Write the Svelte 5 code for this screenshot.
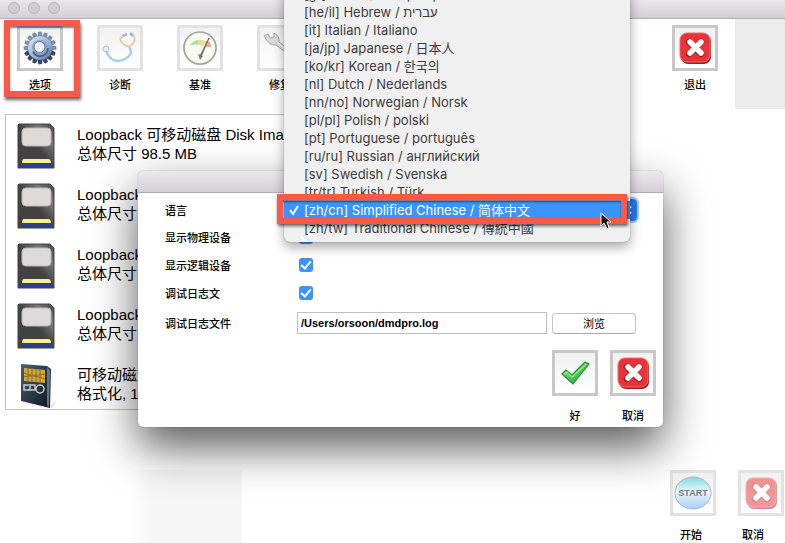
<script lang="ts">
  const languages = [
    { code: "gr", label: "[gr] Greek / ελληνική" },
    { code: "he", label: "[he/il] Hebrew / עברית" },
    { code: "it", label: "[it] Italian / Italiano" },
    { code: "ja", label: "[ja/jp] Japanese / 日本人" },
    { code: "ko", label: "[ko/kr] Korean / 한국의" },
    { code: "nl", label: "[nl] Dutch / Nederlands" },
    { code: "nn", label: "[nn/no] Norwegian / Norsk" },
    { code: "pl", label: "[pl/pl] Polish / polski" },
    { code: "pt", label: "[pt] Portuguese / português" },
    { code: "ru", label: "[ru/ru] Russian / английский" },
    { code: "sv", label: "[sv] Swedish / Svenska" },
    { code: "tr", label: "[tr/tr] Turkish / Türk" },
    { code: "zh-cn", label: "[zh/cn] Simplified Chinese / 简体中文" },
    { code: "zh-tw", label: "[zh/tw] Traditional Chinese / 傳統中國" },
  ];

  const tools = [
    { id: "gear", label: "选项", dim: false },
    { id: "scope", label: "诊断", dim: true },
    { id: "gauge", label: "基准", dim: true },
    { id: "wrench", label: "修复", dim: true },
  ];

  const disks = [
    { name: "Loopback 可移动磁盘 Disk Image", info: "总体尺寸 98.5 MB", card: false },
    { name: "Loopback", info: "总体尺寸", card: false },
    { name: "Loopback", info: "总体尺寸", card: false },
    { name: "Loopback", info: "总体尺寸", card: false },
    { name: "可移动磁盘", info: "格式化, 1", card: true },
  ];

  const teeth = Array.from({ length: 16 }, (_, i) => i * 22.5);

  let language = $state("zh-cn");
  let physical = $state(true);
  let logical = $state(true);
  let debugLog = $state(true);
  let logFile = $state("/Users/orsoon/dmdpro.log");
</script>

{#snippet icon(id: string)}
  <svg class="icon" viewBox="0 0 38 38" aria-hidden="true">
    {#if id === "gear"}
      {#each teeth as angle}
        <path
          d="M17 3 L20.5 2.5 L22 9 H16.5Z"
          fill={angle > 90 && angle < 250 ? "#37475f" : "#7d8ea6"}
          transform="rotate({angle} 19 19)"
        />
      {/each}
      <circle cx="19" cy="19" r="12" fill="url(#steel)" />
      <circle cx="19" cy="19" r="8" fill="#8aa5cb" />
      <path d="M12 23 A8 8 0 0 0 27 19" fill="none" stroke="#4a6389" stroke-width="2" />
      <circle cx="18.5" cy="18" r="5.5" fill="#f6f6f6" stroke="#5f779b" stroke-width="1" />
    {:else if id === "scope"}
      <path d="M5 21 C8 32 17 34 24 30 C31 26 31 23 28 17" fill="none" stroke="#a5cfec" stroke-width="2.5" />
      <path d="M28 18 C18 14 17 8 24 6 M28 18 C36 13 34 6 30 5" fill="none" stroke="#edc9a4" stroke-width="2" />
      <path d="M22 7 L26 5 M29 4 L32 7" stroke="#9fb6cf" stroke-width="2.5" />
      <circle cx="5" cy="20" r="3" fill="#e6edf2" stroke="#adc2d0" />
    {:else if id === "gauge"}
      <circle cx="19" cy="19" r="16" fill="#fbfaf1" stroke="#9fa5a0" stroke-width="1.7" />
      <path d="M8 17 Q13 10 20 11 L20 16 Q13 14 8 17Z" fill="#a7dda0" />
      <path d="M17 11 Q22 10 26 13 L22 17 L17 15Z" fill="#ecdf8d" />
      <path d="M25 12 Q30 11 30 18 L24 18Z" fill="#efa29b" />
      <path d="M28 9 L20 28 L19 27Z" fill="#8b5e5e" stroke="#79736f" stroke-width="1" />
      <path d="M17 25 L22 27 L19 31Z" fill="#747a7a" />
    {:else if id === "wrench"}
      <path d="M3 7 L7 5 L9 9 L13 8 L13 4 Q19 7 18 13 L34 25 L32 29 L15 16 Q8 17 3 7Z" fill="#dadada" stroke="#a5a5a5" />
      <path d="M17 14 L32 26" stroke="#f5f5f5" stroke-width="1.5" />
    {:else if id === "close"}
      <rect x="5" y="5" width="30" height="30" rx="7" fill="#8d2525" />
      <rect x="4" y="4" width="30" height="29" rx="7" fill="#ea3338" stroke="#f26b6b" />
      <path d="M13 13 L25 25 M25 13 L13 25" stroke="#9d1d22" stroke-width="6.5" stroke-linecap="round" />
      <path d="M14 13 L25 24 M25 13 L14 24" stroke="#fff" stroke-width="5.5" stroke-linecap="round" />
    {:else if id === "ok"}
      <path d="M6 20 L10 16 L16 21 L29 8 L33 10 L17 30Z" fill="url(#leaf)" stroke="#278c32" stroke-width="1.2" />
      <path d="M8 20 L11 18 L16 23 L30 10" fill="none" stroke="#9cea88" stroke-width="1.2" />
    {:else if id === "start"}
      <ellipse cx="19" cy="19" rx="18" ry="16" fill="url(#sky)" stroke="#aeb7c6" />
      <text x="19" y="22" text-anchor="middle" class="start-text">START</text>
    {/if}
  </svg>
{/snippet}

<svg class="defs" width="0" height="0" aria-hidden="true">
  <defs>
    <linearGradient id="steel" x1="0" y1="0" x2="1" y2="1">
      <stop offset="0" stop-color="#d5e4f6" />
      <stop offset=".5" stop-color="#a3bde0" />
      <stop offset="1" stop-color="#55709a" />
    </linearGradient>
    <linearGradient id="leaf" x1="0" y1="0" x2="1" y2="1">
      <stop offset="0" stop-color="#9be68c" />
      <stop offset="1" stop-color="#10a72d" />
    </linearGradient>
    <linearGradient id="sky" x1="0" y1="0" x2="0" y2="1">
      <stop offset="0" stop-color="#7fdde0" />
      <stop offset=".45" stop-color="#eaf6fc" />
      <stop offset="1" stop-color="#a9cdf8" />
    </linearGradient>
    <linearGradient id="shell" x1="0" y1="1" x2="1" y2="0">
      <stop offset=".5" stop-color="#424242" />
      <stop offset=".75" stop-color="#777" />
      <stop offset="1" stop-color="#444" />
    </linearGradient>
    <linearGradient id="navy" x1="0" y1="0" x2="1" y2="1">
      <stop offset="0" stop-color="#4a6070" />
      <stop offset="1" stop-color="#0d151f" />
    </linearGradient>
  </defs>
</svg>

<main class="window">
  <header class="titlebar">
    <span class="light"></span>
    <span class="light"></span>
    <span class="light"></span>
  </header>

  <nav class="toolbar">
    {#each tools as tool}
      <div class="tool" class:marked={tool.id === "gear"}>
        <button class="tile" class:dim={tool.dim} aria-labelledby="tool-{tool.id}">{@render icon(tool.id)}</button>
        <span class="caption" id="tool-{tool.id}">{tool.label}</span>
      </div>
    {/each}
    <div class="tool exit">
      <button class="tile" aria-labelledby="tool-exit">{@render icon("close")}</button>
      <span class="caption" id="tool-exit">退出</span>
    </div>
    <div class="banner"></div>
  </nav>

  <ul class="disks">
    {#each disks as disk}
      <li class="disk">
        <svg class="disk-icon" viewBox="0 0 40 46" aria-hidden="true">
          {#if disk.card}
            <path d="M34 43 L40 37 L34 45Z" fill="#c9d0d4" />
            <path d="M4 1 L30 3 L34 6 L33 45 L4 38Z" fill="url(#navy)" />
            <path d="M30 4 L33 7 L32 44 L30 43Z" fill="#637988" />
            <path d="M7 5 L28 7 V20 L7 18Z" fill="#cfa93c" />
            <path d="M11 5 V19 M15 5 V19 M19 6 V19 M23 6 V20 M7 10 Q15 14 28 11 M7 14 Q15 11 28 16" stroke="#876b21" stroke-width="1" fill="none" />
            <path d="M7 22 H18 V27 H7Z M13 23 V27" fill="none" stroke="#c8cdd1" stroke-width="1.5" />
            <circle cx="23" cy="26" r="4" fill="none" stroke="#c8cdd1" stroke-width="1.5" />
          {:else}
            <path d="M2 1 H33 L37 5 V45 H1 V2Z" fill="url(#shell)" stroke="#444" stroke-width="1" />
            <rect x="5" y="5" width="29" height="18" rx="4" fill="#dedada" stroke="#bbb7b7" stroke-width="1" />
            <path d="M7 36 H31 Q34 36 34 40 H5 Q5 36 7 36Z" fill="#f5f193" />
            <path d="M4 40 H34 V45 H4Z" fill="#303b92" />
          {/if}
        </svg>
        <div class="disk-text">
          <div>{disk.name}</div>
          <div>{disk.info}</div>
        </div>
      </li>
    {/each}
  </ul>

  <footer class="footer">
    <div class="shade"></div>
    <div class="actions">
      <div class="action-tiles">
        <button class="tile dim" aria-labelledby="start-caption">{@render icon("start")}</button>
        <button class="tile dim faded" aria-labelledby="stop-caption">{@render icon("close")}</button>
      </div>
      <div class="action-captions">
        <span class="caption" id="start-caption">开始</span>
        <span class="caption" id="stop-caption">取消</span>
      </div>
    </div>
  </footer>

  <section class="dialog" role="dialog" aria-label="选项">
    <div class="dialog-bar"></div>
    <form class="form">
      <div class="row first">
        <label for="language">语言</label>
        <div class="picker">
          <select id="language" bind:value={language}>
            {#each languages as item}
              <option value={item.code}>{item.label}</option>
            {/each}
          </select>
          <svg class="arrows" viewBox="0 0 18 22" aria-hidden="true">
            <path d="M6 9 L9 6 L12 9 M6 13 L9 16 L12 13" fill="none" stroke="#fff" stroke-width="2" />
          </svg>
          <div class="menu" role="listbox" aria-label="语言">
            {#each languages as item}
              <button
                type="button"
                class="option"
                class:selected={item.code === language}
                role="option"
                aria-selected={item.code === language}
                onclick={() => (language = item.code)}
              >
                <svg class="tick" viewBox="0 0 12 12" aria-hidden="true">
                  {#if item.code === language}
                    <path d="M2 6 L5 10 L10 2" fill="none" stroke="#fff" stroke-width="2" />
                  {/if}
                </svg>
                <span>{item.label}</span>
              </button>
            {/each}
          </div>
          <div class="marker"></div>
          <svg class="cursor" viewBox="0 0 12 18" aria-hidden="true">
            <path d="M1 1 V14 L4 11 L7 17 L9 16 L7 10 H11Z" fill="#111" stroke="#fff" stroke-width="1" />
          </svg>
        </div>
      </div>
      <div class="row">
        <label for="physical">显示物理设备</label>
        <input id="physical" type="checkbox" bind:checked={physical} />
      </div>
      <div class="row">
        <label for="logical">显示逻辑设备</label>
        <input id="logical" type="checkbox" bind:checked={logical} />
      </div>
      <div class="row">
        <label for="debug">调试日志文</label>
        <input id="debug" type="checkbox" bind:checked={debugLog} />
      </div>
      <div class="row last">
        <label for="logfile">调试日志文件</label>
        <input id="logfile" type="text" bind:value={logFile} />
        <button type="button" class="browse">浏览</button>
      </div>
      <div class="dialog-actions">
        <div class="choice">
          <button type="button" class="tile" aria-labelledby="ok-caption">{@render icon("ok")}</button>
          <span class="caption" id="ok-caption">好</span>
        </div>
        <div class="choice">
          <button type="button" class="tile" aria-labelledby="cancel-caption">{@render icon("close")}</button>
          <span class="caption" id="cancel-caption">取消</span>
        </div>
      </div>
    </form>
  </section>
</main>

<style>
  :global(body) {
    margin: 0;
    background: #fff;
  }

  * {
    box-sizing: border-box;
  }

  .defs {
    position: absolute;
  }

  .window {
    position: relative;
    min-height: 100vh;
    overflow: hidden;
    background: #fff;
    color: #000;
    font-family: "Liberation Sans", "Noto Sans CJK SC", sans-serif;
    font-size: 11px;
  }

  .titlebar {
    display: flex;
    gap: 8px;
    height: 19px;
    padding: 2px 8px;
    background: linear-gradient(#e9e7e9, #d3d0d3);
    border-bottom: 1px solid #b3b0b3;
  }

  .light {
    width: 12px;
    height: 12px;
    border: 1px solid #b5b3b5;
    border-radius: 50%;
    background: #cfcdcf;
  }

  .toolbar {
    display: flex;
    height: 90px;
  }

  .tool {
    position: relative;
    display: flex;
    flex-direction: column;
    align-items: center;
    gap: 5px;
    width: 80px;
    padding-top: 6px;
  }

  .marked::after {
    content: "";
    position: absolute;
    inset: 1px 0 12px 4px;
    border: 6px solid #fa5849;
    box-shadow: 1px 3px 3px rgba(0, 0, 0, 0.6), inset 0 2px 2px rgba(0, 0, 0, 0.5);
    pointer-events: none;
  }

  .exit {
    margin-left: auto;
  }

  .banner {
    width: 50px;
    background: #ebebeb;
  }

  .tile {
    display: block;
    width: 46px;
    height: 46px;
    padding: 1px;
    border: 3px solid #c8c8c8;
    background: linear-gradient(#f1f1f1, #fff);
  }

  .dim {
    border-color: #e2e2e2;
  }

  .faded .icon {
    opacity: 0.5;
  }

  .icon {
    display: block;
    width: 38px;
    height: 38px;
  }

  .start-text {
    font-family: "Liberation Sans", sans-serif;
    font-size: 9px;
    font-weight: bold;
    fill: #73808e;
  }

  .caption,
  label {
    font-family: "Noto Sans CJK SC", sans-serif;
    font-size: 11px;
    font-weight: 500;
    line-height: 16px;
    white-space: nowrap;
  }

  .disks {
    width: 60%;
    height: 296px;
    margin: 5px 0 0 5px;
    padding: 8px 11px 0;
    overflow: hidden;
    list-style: none;
    border: 1px solid #c3c3c3;
  }

  .disk {
    display: flex;
    gap: 20px;
    height: 60px;
  }

  .disk-icon {
    flex: none;
    width: 40px;
    height: 46px;
  }

  .disk-text {
    padding-top: 2px;
    font-size: 15px;
    line-height: 19px;
    white-space: nowrap;
  }

  .footer {
    display: flex;
    justify-content: space-between;
    margin-top: 60px;
  }

  .shade {
    width: 112px;
    margin-left: 130px;
    background: linear-gradient(90deg, #fff, #f6f6f6 20%);
  }

  .action-tiles {
    display: flex;
    justify-content: flex-end;
    gap: 22px;
    padding-right: 1px;
  }

  .action-captions {
    display: flex;
    justify-content: flex-end;
    gap: 40px;
    padding: 10px 21px 1px 0;
  }

  .dialog {
    position: absolute;
    top: 171px;
    left: 138px;
    width: 525px;
    border-radius: 5px;
    background: #fff;
    box-shadow: 0 0 1px rgba(0, 0, 0, 0.6), 0 20px 45px rgba(0, 0, 0, 0.65);
  }

  .dialog-bar {
    height: 22px;
    border-bottom: 1px solid #b0aeb0;
    border-radius: 5px 5px 0 0;
    background: linear-gradient(#ebe9eb, #d2d0d2);
  }

  .form {
    padding: 4px 7px 4px 27px;
  }

  .row {
    display: flex;
    align-items: center;
    height: 28px;
  }

  .row.first {
    height: 26px;
  }

  .row.last {
    height: 32px;
  }

  label {
    flex: none;
    width: 132px;
  }

  .picker {
    position: relative;
    flex: 1;
    height: 22px;
    margin-right: 19px;
  }

  select {
    appearance: none;
    width: 100%;
    height: 22px;
    padding: 0 20px 0 8px;
    border: 1px solid #2d7df0;
    border-radius: 4px;
    background: #2478ee;
    box-shadow: 0 0 0 2px #9cc7fa;
    color: #fff;
    font-size: 11px;
  }

  .arrows {
    position: absolute;
    top: 0;
    right: 0;
    width: 18px;
    height: 22px;
    pointer-events: none;
  }

  .menu {
    position: absolute;
    bottom: -21px;
    left: -13px;
    width: 346px;
    padding: 5px 0;
    border-radius: 6px;
    background: #f0f0f0;
    box-shadow: 0 0 1px rgba(0, 0, 0, 0.6), 0 5px 12px rgba(0, 0, 0, 0.35);
  }

  .option {
    display: flex;
    align-items: center;
    gap: 4px;
    width: 100%;
    height: 18px;
    padding: 0 4px;
    border: 0;
    background: none;
    color: #3c3c3c;
    font-family: Inter, Roboto, "Noto Sans CJK SC", sans-serif;
    font-size: 13px;
    line-height: 18px;
    white-space: nowrap;
  }

  .selected {
    background: #3b93fe;
    color: #fff;
  }

  .tick {
    width: 12px;
    height: 12px;
  }

  .marker {
    position: absolute;
    top: -5px;
    left: -20px;
    width: 350px;
    height: 30px;
    border: 6px solid #fa5849;
    box-shadow: 1px 2px 3px rgba(0, 0, 0, 0.6), inset 0 2px 2px rgba(0, 0, 0, 0.5);
    pointer-events: none;
  }

  .cursor {
    position: absolute;
    top: 13px;
    left: 303px;
    width: 12px;
    height: 18px;
    pointer-events: none;
  }

  input[type="checkbox"] {
    appearance: none;
    width: 14px;
    height: 14px;
    margin: 0 2px;
    border-radius: 3px;
    background: #3b93fb;
  }

  input[type="checkbox"]:checked::before {
    content: "";
    display: block;
    width: 4px;
    height: 8px;
    margin: 1px 0 0 4px;
    border: solid #fff;
    border-width: 0 2px 2px 0;
    transform: rotate(40deg);
  }

  input[type="text"] {
    width: 250px;
    height: 22px;
    padding: 0 3px;
    border: 1px solid #bfbfbf;
    background: #fff;
    color: #000;
    font-family: "Liberation Sans", sans-serif;
    font-size: 11px;
    font-weight: bold;
  }

  .browse {
    width: 84px;
    height: 21px;
    margin-left: 5px;
    padding: 0;
    border: 1px solid #c6c6c6;
    border-bottom-color: #aaa;
    border-radius: 4px;
    background: #fff;
    color: #000;
    font-family: "Noto Sans CJK SC", sans-serif;
    font-size: 11px;
    line-height: 16px;
  }

  .dialog-actions {
    display: flex;
    justify-content: flex-end;
    gap: 12px;
    padding-top: 11px;
  }

  .choice {
    display: flex;
    flex-direction: column;
    align-items: center;
    gap: 11px;
  }
</style>
